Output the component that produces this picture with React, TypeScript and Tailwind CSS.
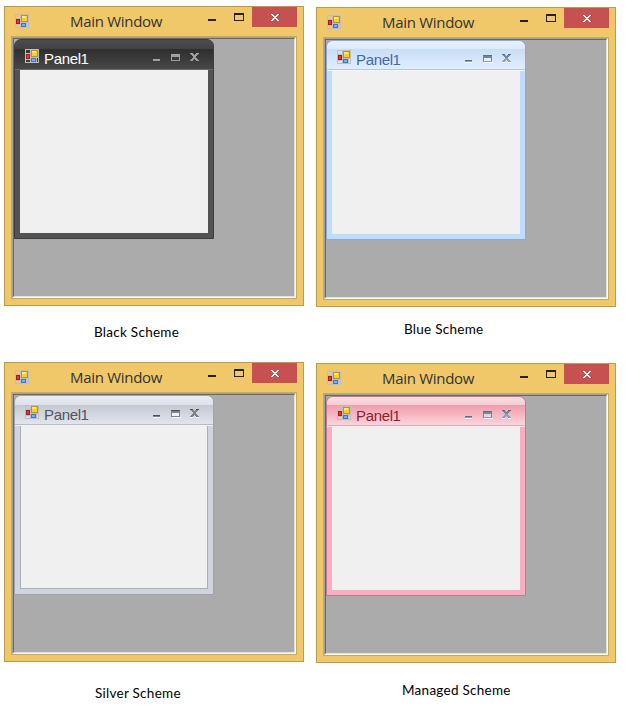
import React from "react";

type Scheme = {
  label: string;
  labelClass: string;
  frame: string;
  edge: string;
  top: string;
  header: string;
  line: string;
  title: string;
  client: string;
  glyph: string;
  glyphMid: string;
  glyphLow: string;
  inner: string;
  shadow: string;
};

const black: Scheme = {
  label: "Black Scheme",
  labelClass: "ml-[90px] mt-[16px] w-[120px]",
  frame: "bg-[#535353]",
  edge: "border-[#3d3d3d]",
  top: "h-[9px] from-[#4c4c4c] to-[#424242]",
  header: "h-5 from-[#2e2e2e] to-[#484848]",
  line: "h-px bg-[#696969]",
  title: "text-white",
  client: "",
  glyph: "#a5a5a5",
  glyphMid: "#a0a0a0",
  glyphLow: "#9a9a9a",
  inner: "none",
  shadow: "none",
};

const blue: Scheme = {
  label: "Blue Scheme",
  labelClass: "ml-[88px] mt-[12px] w-[120px]",
  frame: "bg-[#bfdbff]",
  edge: "border-[#8fa8cc]",
  top: "h-2 from-[#e7f0ff] to-[#dce9fc]",
  header: "h-5 pt-px from-[#cadef5] to-[#e1edff]",
  line: "h-[2px] border-b border-[#f1f6ff] bg-[#b5c8e0]",
  title: "text-[#3e6aaa]",
  client: "",
  glyph: "#5f6f7b",
  glyphMid: "#5f9393",
  glyphLow: "#9a94cc",
  inner: "#e6efff",
  shadow: "#ffffff",
};

const silver: Scheme = {
  label: "Silver Scheme",
  labelClass: "ml-[91px] mt-[21px] w-[120px]",
  frame: "bg-[#d0d4dd]",
  edge: "border-[#a0a3a9]",
  top: "h-[9px] from-[#e9ecf1] to-[#dee1e7]",
  header: "h-[19px] from-[#c4c8d1] to-[#e2e5ed]",
  line: "h-[2px] border-b border-[#eff1f5] bg-[#b8bbc2]",
  title: "text-[#535461]",
  client: "border border-t-0 border-[#adafb2]",
  glyph: "#4e4e50",
  glyphMid: "#858588",
  glyphLow: "#808084",
  inner: "#eff1f5",
  shadow: "#f6f7fa",
};

const managed: Scheme = {
  label: "Managed Scheme",
  labelClass: "ml-[86px] mt-[17px] w-[130px]",
  frame: "bg-[#f8aec0]",
  edge: "border-[#bd7c8b]",
  top: "h-2 from-[#fbdbe1] to-[#f8ccd4]",
  header: "h-5 pt-px from-[#ee9cab] to-[#fbd4dd]",
  line: "h-[2px] border-b border-[#fdeaee] bg-[#d7b0b8]",
  title: "text-[#8f1d2c]",
  client: "",
  glyph: "#5f6f7b",
  glyphMid: "#5f9393",
  glyphLow: "#9a94cc",
  inner: "#fbd0d8",
  shadow: "#ffffff",
};

function FormIcon({ dark = false }: { dark?: boolean }) {
  return (
    <svg width="14" height="14" viewBox="0 0 14 14" shapeRendering="crispEdges" className="shrink-0">
      {dark && <path d="M0 0h14v14H0z" fill="#363636" />}
      <path d="M0 0h14v14H0zM1 1v3h4V1zM1 5v5h4V5zM1 11v2h4v-2zM6 1v7h7V1zM6 9v4h5V9zM12 9v4h1V9z" fillRule="evenodd" fill="#bfbfbf" />
      <path d="M1 5h4v5H1z" fill="#a81818" />
      <path d="M2 6h2v3H2z" fill="#dc3c30" />
      <path d="M6 1h7v7H6z" fill="#c79010" />
      <path d="M7 2h5v5H7z" fill="#f8cd33" />
      <path d="M7 2h4v2H7z" fill="#ffe682" />
      <path d="M6 9h5v4H6z" fill="#3875d8" />
      <path d="M7 10h3v2H7z" fill="#78aeff" />
    </svg>
  );
}

function Cross({ color, mid, low }: { color: string; mid: string; low: string }) {
  return (
    <>
      <path d="M0 0h3v1H0zM6 0h3v1H6z" fill={color} />
      <path d="M1 1h3v1H1zM5 1h3v1H5zM2 2h5v1H2zM3 3h3v1H3z" fill={mid} />
      <path d="M3 4h3v1H3zM2 5h5v1H2zM1 6h3v1H1zM5 6h3v1H5zM0 7h3v1H0zM6 7h3v1H6z" fill={low} />
    </>
  );
}

function Panel({ s }: { s: Scheme }) {
  return (
    <div className={`flex h-[200px] w-[200px] flex-col overflow-hidden rounded-t-[7px] border ${s.edge} ${s.frame}`}>
      <div className={`shrink-0 bg-linear-to-b ${s.top}`} />
      <div className={`flex shrink-0 bg-linear-to-b ${s.header}`}>
        <div className="ml-[10px]">
          <FormIcon dark={s === black} />
        </div>
        <span
          className={`ml-[5px] mt-px w-[95px] whitespace-nowrap font-['Liberation_Sans',sans-serif] text-[15px] leading-[17px] tracking-[-0.35px] ${s.title}`}
        >
          Panel1
        </span>
        <svg width="47" height="10" viewBox="0 0 47 10" shapeRendering="crispEdges" className="ml-[14px] mt-[4px] shrink-0">
          <path d="M0 6h7v1H0z" fill={s.glyph} />
          <path d="M0 7h7v1H0z" fill={s.glyphLow} />
          <path d="M0 8h7v1H0zM19 8h9v1h-9zM37 8h3v1h-3zM43 8h3v1h-3z" fill={s.shadow} />
          <path d="M18 1h9v1h-9z" fill={s.glyph} />
          <path d="M18 2h9v2h-9zM18 4h1v3h-1zM26 4h1v3h-1z" fill={s.glyphMid} />
          <path d="M19 4h7v3h-7z" fill={s.inner} />
          <path d="M18 7h9v1h-9z" fill={s.glyphLow} />
          <g transform="translate(37 0)">
            <Cross color={s.glyph} mid={s.glyphMid} low={s.glyphLow} />
          </g>
        </svg>
      </div>
      <div className={`shrink-0 ${s.line}`} />
      <div className={`mx-[5px] h-[163px] shrink-0 bg-[#f0f0f0] ${s.client}`} />
    </div>
  );
}

function SchemeWindow({ s }: { s: Scheme }) {
  return (
    <div className="h-[300px] w-[300px] shrink-0 border border-[#b99d4d] bg-[#f0c869]">
      <div className="flex h-[29px] pl-[10px]">
        <div className="mt-[7px]">
          <FormIcon />
        </div>
        <span className="ml-[41px] mt-[4px] w-[138px] whitespace-nowrap font-['Open_Sans',sans-serif] text-[15px] leading-5 tracking-[-0.3px] text-[#333]">
          Main Window
        </span>
        <svg width="36" height="10" viewBox="0 0 36 10" shapeRendering="crispEdges" className="mt-[6px] shrink-0">
          <path d="M0 6h8v2H0z" fill="#222" />
          <path d="M26 0h10v8H26zM27 2v5h8V2z" fillRule="evenodd" fill="#222" />
        </svg>
        <div className="ml-2 flex h-5 w-[45px] shrink-0 justify-center bg-[#c75050] pt-[7px]">
          <svg width="8" height="7" viewBox="0 0 8 7" shapeRendering="crispEdges">
            <path d="M0 0h2v1H0zM6 0h2v1H6zM1 1h2v1H1zM5 1h2v1H5zM2 2h4v1H2zM3 3h2v1H3zM2 4h4v1H2zM1 5h2v1H1zM5 5h2v1H5zM0 6h2v1H0zM6 6h2v1H6z" fill="#fff" />
          </svg>
        </div>
      </div>
      <div className="mx-[6px] h-[263px] border border-[#c9a95c]">
        <div className="h-full border border-b-white border-l-[#a0a0a0] border-r-white border-t-[#a0a0a0]">
          <div className="h-full border border-b-[#e3e3e3] border-l-[#696969] border-r-[#e3e3e3] border-t-[#696969] bg-[#ababab]">
            <Panel s={s} />
          </div>
        </div>
      </div>
    </div>
  );
}

function Item({ s }: { s: Scheme }) {
  return (
    <div className="h-[356px] shrink-0">
      <SchemeWindow s={s} />
      <p className={`whitespace-nowrap font-[Lato,sans-serif] text-[13.5px] leading-5 tracking-[0.27px] text-black ${s.labelClass}`}>
        {s.label}
      </p>
    </div>
  );
}

export default function App() {
  return (
    <main className="flex h-[708px] w-[625px] gap-3 overflow-hidden bg-white pl-1">
      <div className="flex w-[300px] flex-col pt-[6px]">
        <Item s={black} />
        <Item s={silver} />
      </div>
      <div className="flex w-[300px] flex-col pt-[7px]">
        <Item s={blue} />
        <Item s={managed} />
      </div>
    </main>
  );
}
